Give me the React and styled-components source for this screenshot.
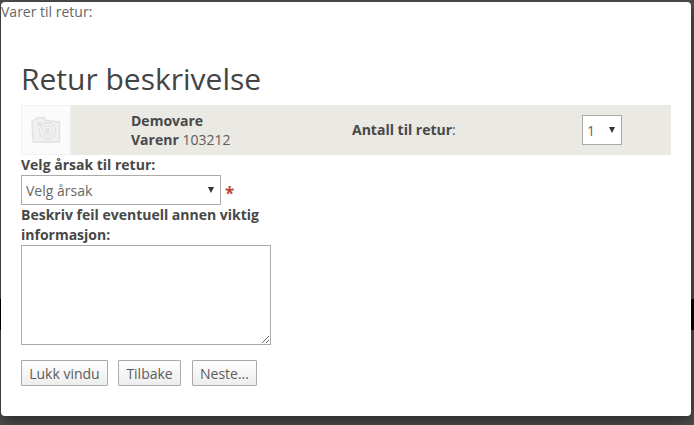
import React from "react";
import styled, { createGlobalStyle } from "styled-components";

const Global = createGlobalStyle`
  html, body { margin: 0; padding: 0; height: 425px; overflow: hidden; }
  body {
    font-family: "Open Sans", "Liberation Sans", sans-serif;
    background:
      linear-gradient(to bottom, transparent 299px, #000 299px, #000 330px, transparent 330px) no-repeat,
      #4f4f4f;
  }
  * { box-sizing: border-box; }
`;

const Modal = styled.div`
  width: 690px;
  height: 414px;
  margin: 2px 0 0 1px;
  background: #fff;
  border-radius: 4px;
  box-shadow: 0 5px 15px rgba(0, 0, 0, 0.5);
  color: #555;
  font-size: 14px;
  line-height: 20px;
`;

const TopLabel = styled.div`
  height: 20px;
  color: #666;
`;

const Content = styled.div`
  padding: 0 20px;
`;

const Title = styled.h1`
  margin: 37px 0 0;
  height: 46px;
  font-size: 30px;
  line-height: 40px;
  font-weight: 400;
  color: #444;
`;

const ItemRow = styled.div`
  display: flex;
  align-items: center;
  width: 650px;
  height: 50px;
  background: #eae9e4;
`;

const Thumb = styled.div`
  width: 50px;
  height: 50px;
  display: flex;
  align-items: center;
  justify-content: center;
  background: #fbfbfb;
  border: 1px solid #f2f2f0;
`;

const ItemInfo = styled.div`
  margin-left: 60px;
  width: 221px;
  line-height: 19px;
  color: #5c5c5c;
`;

const Strong = styled.b`
  font-weight: 700;
  color: #484848;
`;

const Qty = styled.div`
  width: 230px;
  color: #555;
`;

const SelectWrap = styled.div`
  position: relative;
  display: inline-block;
  width: ${(p) => p.$w}px;
  height: ${(p) => p.$h}px;
  &::after {
    content: "";
    position: absolute;
    top: 12px;
    right: 7px;
    border-left: 3.5px solid transparent;
    border-right: 3.5px solid transparent;
    border-top: 6px solid #333;
    pointer-events: none;
  }
`;

const Select = styled.select`
  appearance: none;
  width: 100%;
  height: 100%;
  padding: 0 0 0 4px;
  background: #fff;
  border: 1px solid #aaa;
  border-radius: 0;
  font-family: inherit;
  font-size: 14px;
  color: #666;
  outline: none;
`;

const Label = styled.label`
  display: block;
  font-weight: 700;
  color: #484848;
  width: 290px;
`;

const ReasonRow = styled.div`
  display: flex;
  align-items: flex-start;
`;

const Required = styled.span`
  margin-left: 4px;
  margin-top: 9px;
  color: #b9453a;
  font-size: 17px;
  font-weight: 700;
  line-height: 20px;
`;

const TextArea = styled.textarea`
  display: block;
  width: 250px;
  height: 100px;
  margin: 0;
  padding: 4px;
  background: #fff;
  border: 1px solid #aaa;
  border-radius: 0;
  outline: none;
  font-family: inherit;
  font-size: 14px;
`;

const Buttons = styled.div`
  display: flex;
  gap: 10.3px;
  margin-top: 15px;
`;

const Button = styled.button`
  height: 26px;
  padding: 0 7.2px;
  background: linear-gradient(to bottom, #fff, #ededed);
  border: 1px solid #aaa;
  border-radius: 1px;
  font-family: inherit;
  font-size: 14px;
  color: #5c5c5c;
  &:last-child {
    margin-left: 0.6px;
  }
`;

const CameraIcon = () => (
  <svg width="32" height="30" viewBox="0 0 32 30" fill="none" stroke="#e2e2e2" strokeWidth="1.4">
    <path d="M2 6.5 8 2.5h6l2 3 13.5 1.5 0 20H3z" fill="#f0f0f0" />
    <circle cx="17.5" cy="16" r="8" fill="#f6f6f6" />
    <circle cx="17.5" cy="16" r="5.2" />
    <circle cx="17.5" cy="16" r="2.4" fill="#e6e6e6" />
    <circle cx="9" cy="9" r="1.4" fill="#e6e6e6" />
  </svg>
);

export default function App() {
  return (
    <>
      <Global />
      <Modal>
        <TopLabel>Varer til retur:</TopLabel>
        <Content>
          <Title>Retur beskrivelse</Title>
          <ItemRow>
            <Thumb>
              <CameraIcon />
            </Thumb>
            <ItemInfo>
              <Strong>Demovare</Strong>
              <br />
              <Strong>Varenr</Strong> 103212
            </ItemInfo>
            <Qty>
              <Strong>Antall til retur</Strong>:
            </Qty>
            <SelectWrap $w={40} $h={30}>
              <Select defaultValue="1">
                <option>1</option>
              </Select>
            </SelectWrap>
          </ItemRow>
          <Label>Velg årsak til retur:</Label>
          <ReasonRow>
            <SelectWrap $w={200} $h={30}>
              <Select defaultValue="Velg årsak">
                <option>Velg årsak</option>
              </Select>
            </SelectWrap>
            <Required>*</Required>
          </ReasonRow>
          <Label>Beskriv feil eventuell annen viktig informasjon:</Label>
          <TextArea />
          <Buttons>
            <Button>Lukk vindu</Button>
            <Button>Tilbake</Button>
            <Button>Neste...</Button>
          </Buttons>
        </Content>
      </Modal>
    </>
  );
}
